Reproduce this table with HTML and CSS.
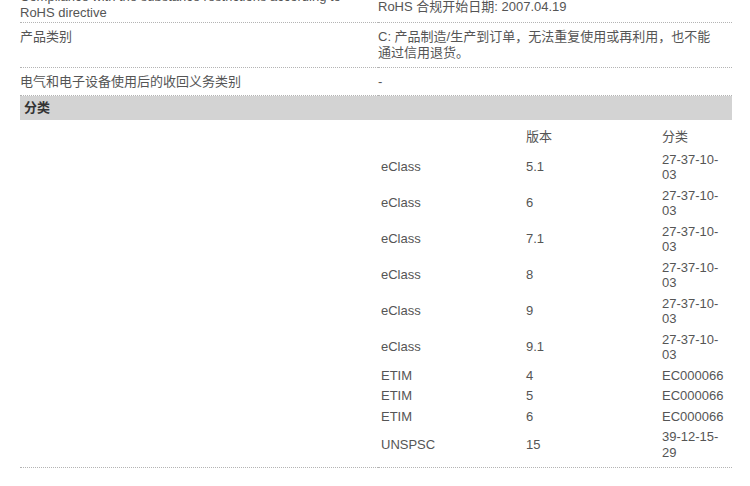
FILE: index.html
```html
<!DOCTYPE html>
<html lang="zh-CN">
<head>
<meta charset="utf-8">
<title>产品数据</title>
<link rel="stylesheet" href="styles.css">
</head>
<body>
<div class="page">
  <table class="spec">
    <colgroup><col class="c-label"><col class="c-value"></colgroup>
    <tbody>
      <tr class="row-cut">
        <td class="label">Compliance with the substance restrictions according to RoHS directive</td>
        <td class="value value-mid">RoHS 合规开始日期: 2007.04.19</td>
      </tr>
      <tr>
        <td class="label">产品类别</td>
        <td class="value">C: 产品制造/生产到订单，无法重复使用或再利用，也不能通过信用退货。</td>
      </tr>
      <tr class="row-last">
        <td class="label">电气和电子设备使用后的收回义务类别</td>
        <td class="value">-</td>
      </tr>
      <tr class="section">
        <th colspan="2">分类</th>
      </tr>
      <tr class="row-nest">
        <td class="label"></td>
        <td class="nest">
          <table class="cls">
            <colgroup><col class="k1"><col class="k2"><col class="k3"></colgroup>
            <thead>
              <tr><th></th><th>版本</th><th>分类</th></tr>
            </thead>
            <tbody>
              <tr><td>eClass</td><td>5.1</td><td>27-37-10-03</td></tr>
              <tr><td>eClass</td><td>6</td><td>27-37-10-03</td></tr>
              <tr><td>eClass</td><td>7.1</td><td>27-37-10-03</td></tr>
              <tr><td>eClass</td><td>8</td><td>27-37-10-03</td></tr>
              <tr><td>eClass</td><td>9</td><td>27-37-10-03</td></tr>
              <tr><td>eClass</td><td>9.1</td><td>27-37-10-03</td></tr>
              <tr><td>ETIM</td><td>4</td><td>EC000066</td></tr>
              <tr><td>ETIM</td><td>5</td><td>EC000066</td></tr>
              <tr><td>ETIM</td><td>6</td><td>EC000066</td></tr>
              <tr><td>UNSPSC</td><td>15</td><td>39-12-15-29</td></tr>
            </tbody>
          </table>
        </td>
      </tr>
    </tbody>
  </table>
</div>
</body>
</html>
```

FILE: styles.css
```css
html, body {
  margin: 0;
  padding: 0;
  background: #ffffff;
}

body {
  font-family: "Liberation Sans", Arial, "Noto Sans CJK SC", sans-serif;
  font-size: 13px;
  line-height: 16px;
  color: #555555;
}

.page {
  width: 712px;
  padding-left: 20px;
  margin-top: -17px;
}

.spec {
  width: 712px;
  border-collapse: collapse;
  table-layout: fixed;
}

.c-label { width: 358px; }
.c-value { width: 354px; }

.spec > tbody > tr > td {
  vertical-align: top;
  padding: 6px 14px 6px 0;
  border-bottom: 1px dotted #b4b4b4;
  text-align: left;
}

.spec > tbody > tr.row-cut > td {
  padding-bottom: 1px;
}

.spec > tbody > tr.row-cut > td.value-mid {
  vertical-align: middle;
  padding-top: 9px;
}

.spec > tbody > tr.row-last > td {
  padding-bottom: 5px;
}

.section th {
  background: #d3d3d3;
  color: #333333;
  font-weight: bold;
  text-align: left;
  padding: 4px 4px;
  line-height: 16px;
}

.spec > tbody > tr.row-nest > td {
  padding: 6px 0 4px 0;
}

.cls {
  width: 354px;
  border-collapse: collapse;
  table-layout: fixed;
}

.k1 { width: 145px; }
.k2 { width: 136px; }
.k3 { width: 73px; }

.cls th,
.cls td {
  padding: 2.5px 3px;
  line-height: 15.5px;
  text-align: left;
  vertical-align: middle;
  font-weight: normal;
  color: #555555;
  border: 0;
}

.cls thead th {
  padding-bottom: 5px;
}
```
